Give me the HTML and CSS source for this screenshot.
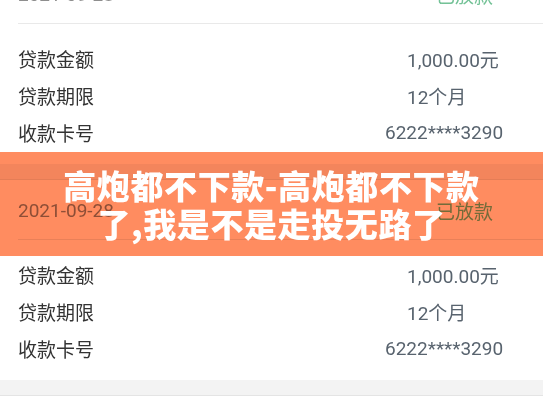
FILE: index.html
```html
<!DOCTYPE html>
<html lang="zh-CN">
<head>
<meta charset="utf-8">
<title>贷款记录</title>
<link rel="stylesheet" href="styles.css">
</head>
<body>
<main class="list">
  <section class="card">
    <div class="card-head">
      <span class="date">2021-09-28</span>
      <span class="status">已放款</span>
    </div>
    <div class="rows">
      <div class="row"><span class="label">贷款金额</span><span class="value">1,000.00元</span></div>
      <div class="row"><span class="label">贷款期限</span><span class="value">12个月</span></div>
      <div class="row"><span class="label">收款卡号</span><span class="value value-wide">6222****3290</span></div>
    </div>
  </section>
  <div class="gap"></div>
  <section class="card">
    <div class="card-head">
      <span class="date">2021-09-28</span>
      <span class="status">已放款</span>
    </div>
    <div class="rows">
      <div class="row"><span class="label">贷款金额</span><span class="value">1,000.00元</span></div>
      <div class="row"><span class="label">贷款期限</span><span class="value">12个月</span></div>
      <div class="row"><span class="label">收款卡号</span><span class="value value-wide">6222****3290</span></div>
    </div>
  </section>
  <div class="gap"></div>
</main>
<div class="banner">
  <h1 class="banner-text">高炮都不下款-高炮都不下款<br>了,我是不是走投无路了</h1>
</div>
</body>
</html>
```

FILE: styles.css
```css
html, body {
  margin: 0;
  padding: 0;
  background: #ffffff;
  overflow: hidden;
}

body {
  width: 543px;
  height: 408px;
  position: relative;
  font-family: Roboto, "Noto Sans CJK SC", sans-serif;
}

.list {
  margin-top: -36px;
}

.card {
  padding-left: 18px;
  height: 200px;
  box-sizing: border-box;
  background: #ffffff;
  overflow: hidden;
}

.card-head {
  display: flex;
  justify-content: space-between;
  align-items: center;
  height: 60px;
  padding-top: 3px;
  box-sizing: border-box;
  padding-right: 50px;
  border-bottom: 1px solid #e9e9e9;
  font-size: 19px;
  line-height: 24px;
}

.date {
  color: #8e8e8e;
  font-family: Roboto, "Noto Sans CJK SC", sans-serif;
}

.status {
  color: #74c297;
  font-family: "Noto Sans CJK SC", sans-serif;
}

.rows {
  padding-top: 16px;
}

.row {
  display: grid;
  grid-template-columns: 389px 1fr;
  align-items: center;
  height: 37px;
  font-size: 19px;
}

.label {
  color: #333333;
  font-family: "Noto Sans CJK SC", sans-serif;
}

.value {
  color: #58636e;
  font-family: Roboto, "Noto Sans CJK SC", sans-serif;
  white-space: nowrap;
}

.value-wide {
  margin-left: -22px;
}

.gap {
  height: 15px;
  background: #f3f3f3;
  border-bottom: 1px solid #e4e4e4;
}

.banner {
  position: absolute;
  top: 152px;
  left: 0;
  right: 0;
  height: 104px;
  box-sizing: border-box;
  padding: 14px 0;
}

.banner::before {
  content: "";
  position: absolute;
  inset: 0;
  background: #ff8c60;
  mix-blend-mode: multiply;
}

.banner-text {
  position: relative;
  margin: 0;
  color: #ffffff;
  font-family: "Noto Sans CJK SC", sans-serif;
  font-weight: 900;
  font-size: 33px;
  line-height: 38px;
  text-align: center;
  letter-spacing: 0.6px;
}
```
